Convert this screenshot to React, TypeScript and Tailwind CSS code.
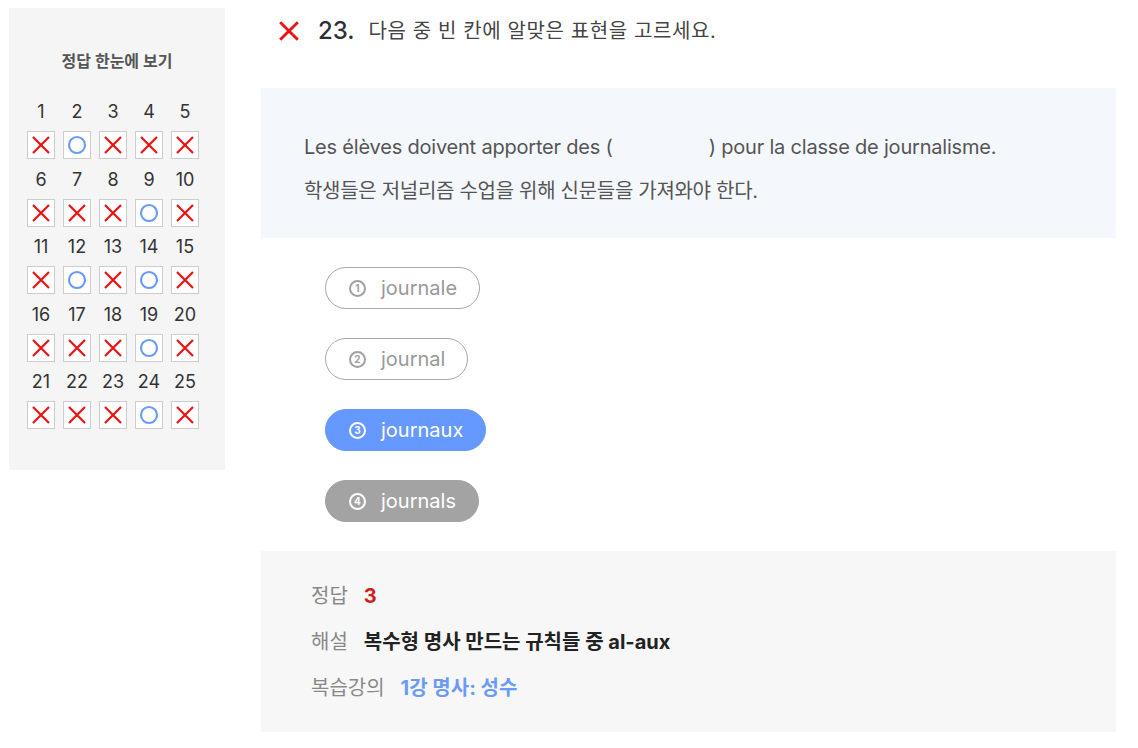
import React from 'react';

type Mark = 'o' | 'x';

const marks: Mark[] = [
  'x', 'o', 'x', 'x', 'x',
  'x', 'x', 'x', 'o', 'x',
  'x', 'o', 'x', 'o', 'x',
  'x', 'x', 'x', 'o', 'x',
  'x', 'x', 'x', 'o', 'x',
];

const font = { fontFamily: 'Inter, "Noto Sans CJK KR", sans-serif' };

function XMark({ size = 20, stroke = 2.2 }: { size?: number; stroke?: number }) {
  return (
    <svg width={size} height={size} viewBox="0 0 20 20">
      <path d="M2 2L18 18M18 2L2 18" stroke="#ee1111" strokeWidth={stroke} />
    </svg>
  );
}

function OMark() {
  return (
    <svg width={20} height={20} viewBox="0 0 20 20">
      <circle cx="10" cy="10" r="8" fill="none" stroke="#6b9bfa" strokeWidth={2.2} />
    </svg>
  );
}

function CircledNum({ n, color }: { n: number; color: string }) {
  return (
    <span
      className="flex h-[17px] w-[17px] items-center justify-center rounded-full border-2 text-[10px] font-bold leading-none"
      style={{ borderColor: color, color }}
    >
      {n}
    </span>
  );
}

function Sidebar() {
  const rows = [0, 1, 2, 3, 4];
  return (
    <aside className="mt-2 ml-[9px] h-[462px] w-[216px] shrink-0 bg-[#f5f5f5]">
      <h2 className="pt-[41px] text-center text-[16px] font-semibold text-[#555]">정답 한눈에 보기</h2>
      <div className="mt-[23px] flex flex-col pl-[18px]">
        {rows.map((r) => (
          <div key={r} className="flex flex-col">
            <div className="flex h-[35px] items-end gap-[8px] pb-[10px]">
              {[0, 1, 2, 3, 4].map((c) => (
                <span key={c} className="w-[28px] text-center text-[18px] leading-none text-[#333]">
                  {r * 5 + c + 1}
                </span>
              ))}
            </div>
            <div className="flex h-[32.5px] items-start gap-[8px]">
              {[0, 1, 2, 3, 4].map((c) => (
                <span
                  key={c}
                  className="flex h-[28px] w-[28px] items-center justify-center border border-[#cccccc] bg-white"
                >
                  {marks[r * 5 + c] === 'x' ? <XMark /> : <OMark />}
                </span>
              ))}
            </div>
          </div>
        ))}
      </div>
    </aside>
  );
}

const options = [
  { n: 1, label: 'journale', kind: 'plain' },
  { n: 2, label: 'journal', kind: 'plain' },
  { n: 3, label: 'journaux', kind: 'selected' },
  { n: 4, label: 'journals', kind: 'wrong' },
];

function Option({ n, label, kind }: { n: number; label: string; kind: string }) {
  const cls =
    kind === 'selected'
      ? 'bg-[#6699ff] border-[#6699ff] text-white'
      : kind === 'wrong'
        ? 'bg-[#a3a3a3] border-[#a3a3a3] text-white'
        : 'bg-white border-[#a8a8a8] text-[#999]';
  const iconColor = kind === 'plain' ? '#a0a0a0' : '#ffffff';
  return (
    <div className={`flex h-[42px] items-center gap-[15px] self-start rounded-full border pl-[23px] pr-[22px] ${cls}`}>
      <CircledNum n={n} color={iconColor} />
      <span className="text-[20px] leading-none">{label}</span>
    </div>
  );
}

export default function App() {
  return (
    <div className="flex min-h-[748px] w-[1138px] gap-[36px] bg-white" style={font}>
      <Sidebar />
      <main className="flex w-[855px] flex-col">
        <header className="flex h-[88px] items-start gap-[18px] pt-[18px] pl-[17px]">
          <span className="mt-[2px]">
            <XMark size={22} stroke={2.6} />
          </span>
          <span className="text-[24px] font-medium leading-[26px] text-[#2d2f36]">23.</span>
          <span className="-ml-[4px] text-[20px] leading-[26px] tracking-[0.6px] text-[#444]">
            다음 중 빈 칸에 알맞은 표현을 고르세요.
          </span>
        </header>

        <section className="h-[150px] bg-[#f4f8fc] pl-[43px] pt-[45px] text-[20px] text-[#555]">
          <p className="leading-[28px] tracking-[-0.2px]">
            Les élèves doivent apporter des (<span className="inline-block w-[96px]" />) pour la classe de journalisme.
          </p>
          <p className="mt-[16px] leading-[28px] tracking-[-0.3px]">학생들은 저널리즘 수업을 위해 신문들을 가져와야 한다.</p>
        </section>

        <div className="flex flex-col gap-[29px] pl-[64px] pt-[29px] pb-[29px]">
          {options.map((o) => (
            <Option key={o.n} {...o} />
          ))}
        </div>

        <section className="flex h-[181px] flex-col gap-[18px] bg-[#f7f7f7] pl-[50px] pt-[31px] text-[20px]">
          <div className="flex items-center gap-[16px] leading-[28px]">
            <span className="text-[#888]">정답</span>
            <span className="font-bold text-[#d01c1c]">3</span>
          </div>
          <div className="flex items-center gap-[16px] leading-[28px]">
            <span className="text-[#888]">해설</span>
            <span className="font-bold text-[#222]">복수형 명사 만드는 규칙들 중 al-aux</span>
          </div>
          <div className="flex items-center gap-[16px] leading-[28px]">
            <span className="text-[#888]">복습강의</span>
            <span className="font-bold text-[#6b9bfa]">1강 명사: 성수</span>
          </div>
        </section>
      </main>
    </div>
  );
}
